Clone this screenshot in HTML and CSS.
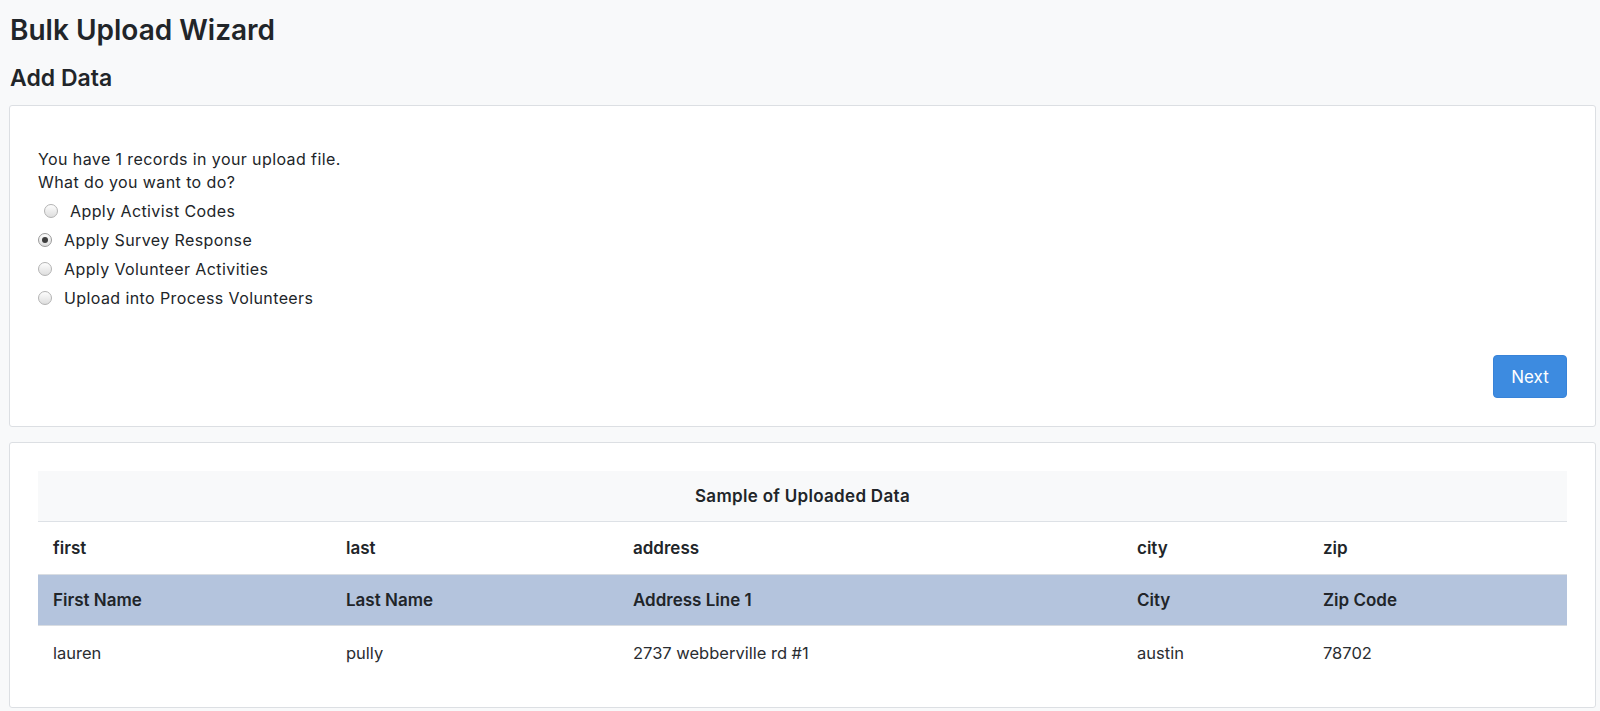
FILE: index.html
```html
<!DOCTYPE html>
<html lang="en">
<head>
    <meta charset="UTF-8">
    <title>Bulk Upload Wizard</title>
    <link rel="stylesheet" href="styles.css">
</head>
<body>
    <h1>Bulk Upload Wizard</h1>
    <h2>Add Data</h2>

    <div class="card">
        <div class="card-body choose">
            <p>You have 1 records in your upload file.</p>
            <p>What do you want to do?</p>
            <div class="options">
                <label class="option first"><input type="radio" name="action"> Apply Activist Codes</label>
                <label class="option"><input type="radio" name="action" checked> Apply Survey Response</label>
                <label class="option"><input type="radio" name="action"> Apply Volunteer Activities</label>
                <label class="option"><input type="radio" name="action"> Upload into Process Volunteers</label>
            </div>
            <div class="actions">
                <button>Next</button>
            </div>
        </div>
    </div>

    <div class="card">
        <div class="card-body">
            <table class="sample">
                <colgroup>
                    <col class="c-first">
                    <col class="c-last">
                    <col class="c-address">
                    <col class="c-city">
                    <col>
                </colgroup>
                <thead>
                    <tr class="caption"><th colspan="5">Sample of Uploaded Data</th></tr>
                    <tr class="source"><th>first</th><th>last</th><th>address</th><th>city</th><th>zip</th></tr>
                </thead>
                <tbody>
                    <tr class="mapped"><th>First Name</th><th>Last Name</th><th>Address Line 1</th><th>City</th><th>Zip Code</th></tr>
                    <tr class="row"><td>lauren</td><td>pully</td><td>2737 webberville rd #1</td><td>austin</td><td>78702</td></tr>
                </tbody>
            </table>
        </div>
    </div>
</body>
</html>
```

FILE: styles.css
```css
body {
    font-family: Inter, "Liberation Sans", Arial, sans-serif;
    background-color: #f8f9fa;
    color: #212529;
    margin: 0;
    padding: 12px 4px 0 9px;
    font-size: 16px;
}
h1 {
    font-size: 28px;
    font-weight: 600;
    margin: 0 0 0 1px;
    line-height: 36px;
}
h2 {
    font-size: 23px;
    font-weight: 600;
    margin: 15px 0 0 1px;
    line-height: 30px;
}
.card {
    background-color: #fff;
    border: 1px solid #dcdfe3;
    border-radius: 3px;
    margin-top: 12px;
}
.card + .card {
    margin-top: 15px;
}
.card-body {
    padding: 28px;
}
.choose {
    padding-top: 42px;
    letter-spacing: 0.4px;
}
.choose p {
    margin: 0;
    line-height: 23px;
}
.options {
    margin-top: 2px;
}
.option {
    display: flex;
    align-items: center;
    height: 29px;
}
.option.first {
    padding-left: 6px;
}
.option input {
    appearance: none;
    -webkit-appearance: none;
    width: 14px;
    height: 14px;
    margin: 0 12px 0 0;
    border: 1px solid #b3b3b3;
    border-radius: 50%;
    background: linear-gradient(#fdfdfd, #dedede);
    position: relative;
}
.option input:checked {
    border-color: #9a9a9a;
}
.option input:checked::after {
    content: "";
    position: absolute;
    width: 6px;
    height: 6px;
    border-radius: 50%;
    background-color: #3d3d3d;
    top: 3px;
    left: 3px;
}
.actions {
    display: flex;
    justify-content: flex-end;
    margin-top: 43px;
}
button {
    background-color: #3d8be0;
    color: #fff;
    border: 1px solid #3883d8;
    border-radius: 4px;
    font-family: inherit;
    font-size: 17px;
    width: 74px;
    height: 43px;
    cursor: pointer;
}
.sample {
    width: 100%;
    border-collapse: separate;
    border-spacing: 0;
    table-layout: fixed;
}
.c-first { width: 293px; }
.c-last { width: 287px; }
.c-address { width: 504px; }
.c-city { width: 186px; }
.sample th, .sample td {
    text-align: left;
    padding: 0 15px;
    font-size: 17px;
}
.sample th {
    font-weight: 600;
}
.sample td {
    font-size: 16.5px;
    font-weight: 400;
    color: #2a2d31;
}
.sample .caption th {
    background-color: #f8f9fa;
    text-align: center;
    height: 50px;
    letter-spacing: 0.3px;
    border-bottom: 1px solid #dde1e6;
}
.sample .source th {
    height: 52px;
}
.sample .mapped th {
    background-color: #b4c4dd;
    height: 50px;
    border-top: 1px solid #d9dde2;
    border-bottom: 1px solid #d9dde2;
}
.sample .row td {
    height: 53px;
}
```
